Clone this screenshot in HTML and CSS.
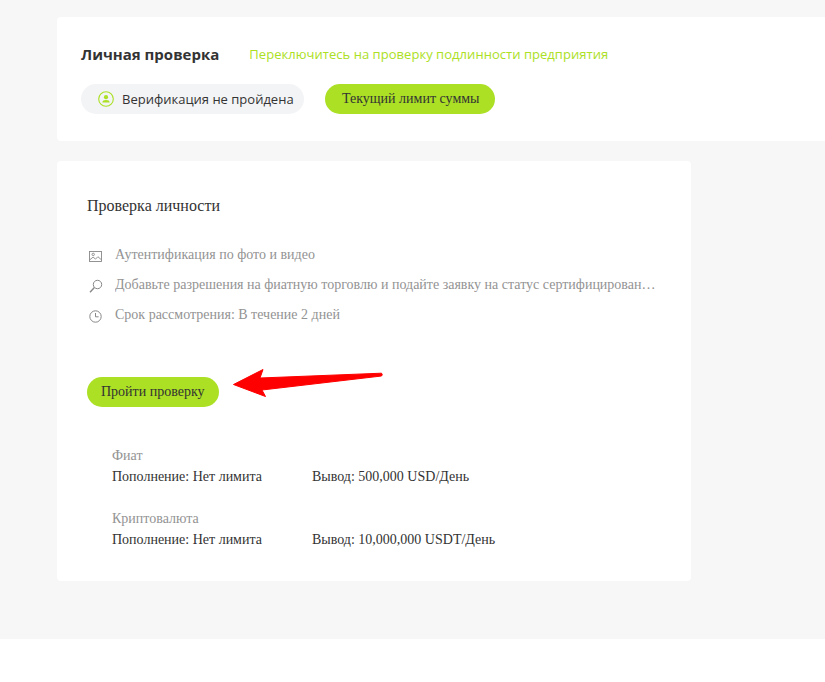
FILE: index.html
```html
<!DOCTYPE html>
<html lang="ru">
<head>
    <meta charset="UTF-8">
    <meta name="viewport" content="width=device-width, initial-scale=1.0">
    <title>Личная проверка</title>
    <link rel="stylesheet" href="styles.css">
</head>
<body>
    <div class="page">
        <div class="card-top">
            <div class="top-row">
                <h3>Личная проверка</h3>
                <a href="#" class="switch-link">Переключитесь на проверку подлинности предприятия</a>
            </div>
            <div class="status-row">
                <div class="status">
                    <svg class="status-icon" width="16" height="16" viewBox="0 0 16 16">
                        <circle cx="8" cy="8" r="7.3" fill="none" stroke="#abe024" stroke-width="1.1"/>
                        <circle cx="8" cy="6.2" r="2.1" fill="#abe024"/>
                        <path d="M4.3 11.6c0-1.9 1.6-2.6 3.7-2.6s3.7.7 3.7 2.6z" fill="#abe024"/>
                    </svg>
                    <span>Верификация не пройдена</span>
                </div>
                <button class="btn btn-limit">Текущий лимит суммы</button>
            </div>
        </div>

        <div class="card-main">
            <h4>Проверка личности</h4>
            <ul class="features">
                <li>
                    <svg width="14" height="14" viewBox="0 0 14 14" fill="none" stroke="#888" stroke-width="0.9">
                        <rect x="0.5" y="2.5" width="12" height="10"/>
                        <circle cx="4.2" cy="5.4" r="1.2"/>
                        <path d="M0.8 10.8l3.3-2.7 2.4 2 2.4-2.4 3.6 3.2"/>
                    </svg>
                    <span>Аутентификация по фото и видео</span>
                </li>
                <li>
                    <svg width="14" height="14" viewBox="0 0 14 14" fill="none" stroke="#888" stroke-width="1">
                        <circle cx="8.5" cy="5.5" r="4.2"/>
                        <path d="M5.4 8.6L1 13.2" stroke-width="1.4"/>
                    </svg>
                    <span>Добавьте разрешения на фиатную торговлю и подайте заявку на статус сертифицированного продавца</span>
                </li>
                <li>
                    <svg width="14" height="14" viewBox="0 0 14 14" fill="none" stroke="#888" stroke-width="1">
                        <circle cx="6.5" cy="7.5" r="5.7"/>
                        <path d="M6.5 4V7.8H9.6"/>
                    </svg>
                    <span>Срок рассмотрения: В течение 2 дней</span>
                </li>
            </ul>

            <div class="action">
                <button class="btn btn-go">Пройти проверку</button>
                <svg class="arrow" width="152" height="32" viewBox="0 0 152 32">
                    <path d="M1.5 18.5L31 3.5 28 12 149.5 7.2Q151 8.7 149.5 10L30 24 33.5 30.5Z" fill="#ff0000" stroke="#ff0000" stroke-linejoin="round"/>
                </svg>
            </div>

            <div class="limits">
                <div class="limit-group">
                    <div class="limit-name">Фиат</div>
                    <div class="limit-row">
                        <span class="limit-in">Пополнение: Нет лимита</span>
                        <span>Вывод: 500,000 USD/День</span>
                    </div>
                </div>
                <div class="limit-group">
                    <div class="limit-name">Криптовалюта</div>
                    <div class="limit-row">
                        <span class="limit-in">Пополнение: Нет лимита</span>
                        <span>Вывод: 10,000,000 USDT/День</span>
                    </div>
                </div>
            </div>
        </div>
    </div>
</body>
</html>
```

FILE: styles.css
```css
html, body {
    margin: 0;
    padding: 0;
    background: #fff;
}
body {
    font-family: "Liberation Serif", serif;
    font-size: 14px;
    color: #333;
    overflow: hidden;
}
.page {
    background: #f7f7f7;
    height: 639px;
    padding: 17px 0 0 57px;
    box-sizing: border-box;
}
.card-top {
    background: #fff;
    border-radius: 4px 0 0 4px;
    height: 124px;
    padding: 27px 0 0 24px;
    box-sizing: border-box;
    margin-bottom: 20px;
}
.top-row {
    display: flex;
    align-items: center;
    height: 20px;
}
h3 {
    margin: 0 30px 0 0;
    font-family: "Open Sans", sans-serif;
    font-size: 15px;
    font-weight: 700;
    color: #333;
}
.switch-link {
    font-family: "Open Sans", sans-serif;
    font-size: 13px;
    letter-spacing: 0.04px;
    color: #abe024;
    text-decoration: none;
}
.status-row {
    display: flex;
    align-items: center;
    margin-top: 20px;
}
.status {
    display: flex;
    align-items: center;
    height: 30px;
    width: 223px;
    box-sizing: border-box;
    padding-left: 17px;
    background: #f3f4f6;
    border-radius: 15px;
    font-family: "Open Sans", sans-serif;
    font-size: 13px;
    color: #333;
    margin-right: 21px;
}
.status-icon {
    margin-right: 8px;
}
.btn {
    height: 30px;
    padding: 0 14px;
    border: none;
    border-radius: 15px;
    background: #abe024;
    font-family: "Liberation Serif", serif;
    font-size: 14px;
    color: #333;
    cursor: pointer;
}
.btn-limit {
    padding: 0 15px 0 17px;
}
.card-main {
    background: #fff;
    border-radius: 4px;
    width: 634px;
    height: 420px;
    padding: 36px 30px 0;
    box-sizing: border-box;
}
h4 {
    margin: 0;
    font-size: 16px;
    font-weight: 400;
    line-height: 18px;
    color: #333;
}
.features {
    list-style: none;
    margin: 25px 0 0;
    padding: 0;
}
.features li {
    display: flex;
    align-items: center;
    height: 30px;
    color: #939393;
}
.features svg {
    flex: none;
    margin: 2px 12px 0 2px;
}
.features span {
    white-space: nowrap;
    overflow: hidden;
    text-overflow: ellipsis;
    width: 541px;
}
.action {
    position: relative;
    margin-top: 47px;
}
.arrow {
    position: absolute;
    left: 145px;
    top: -11px;
}
.limits {
    margin: 38px 0 0 25px;
}
.limit-group {
    margin-bottom: 21px;
    line-height: 21px;
}
.limit-name {
    color: #939393;
}
.limit-row {
    display: flex;
}
.limit-in {
    width: 200px;
}
```
